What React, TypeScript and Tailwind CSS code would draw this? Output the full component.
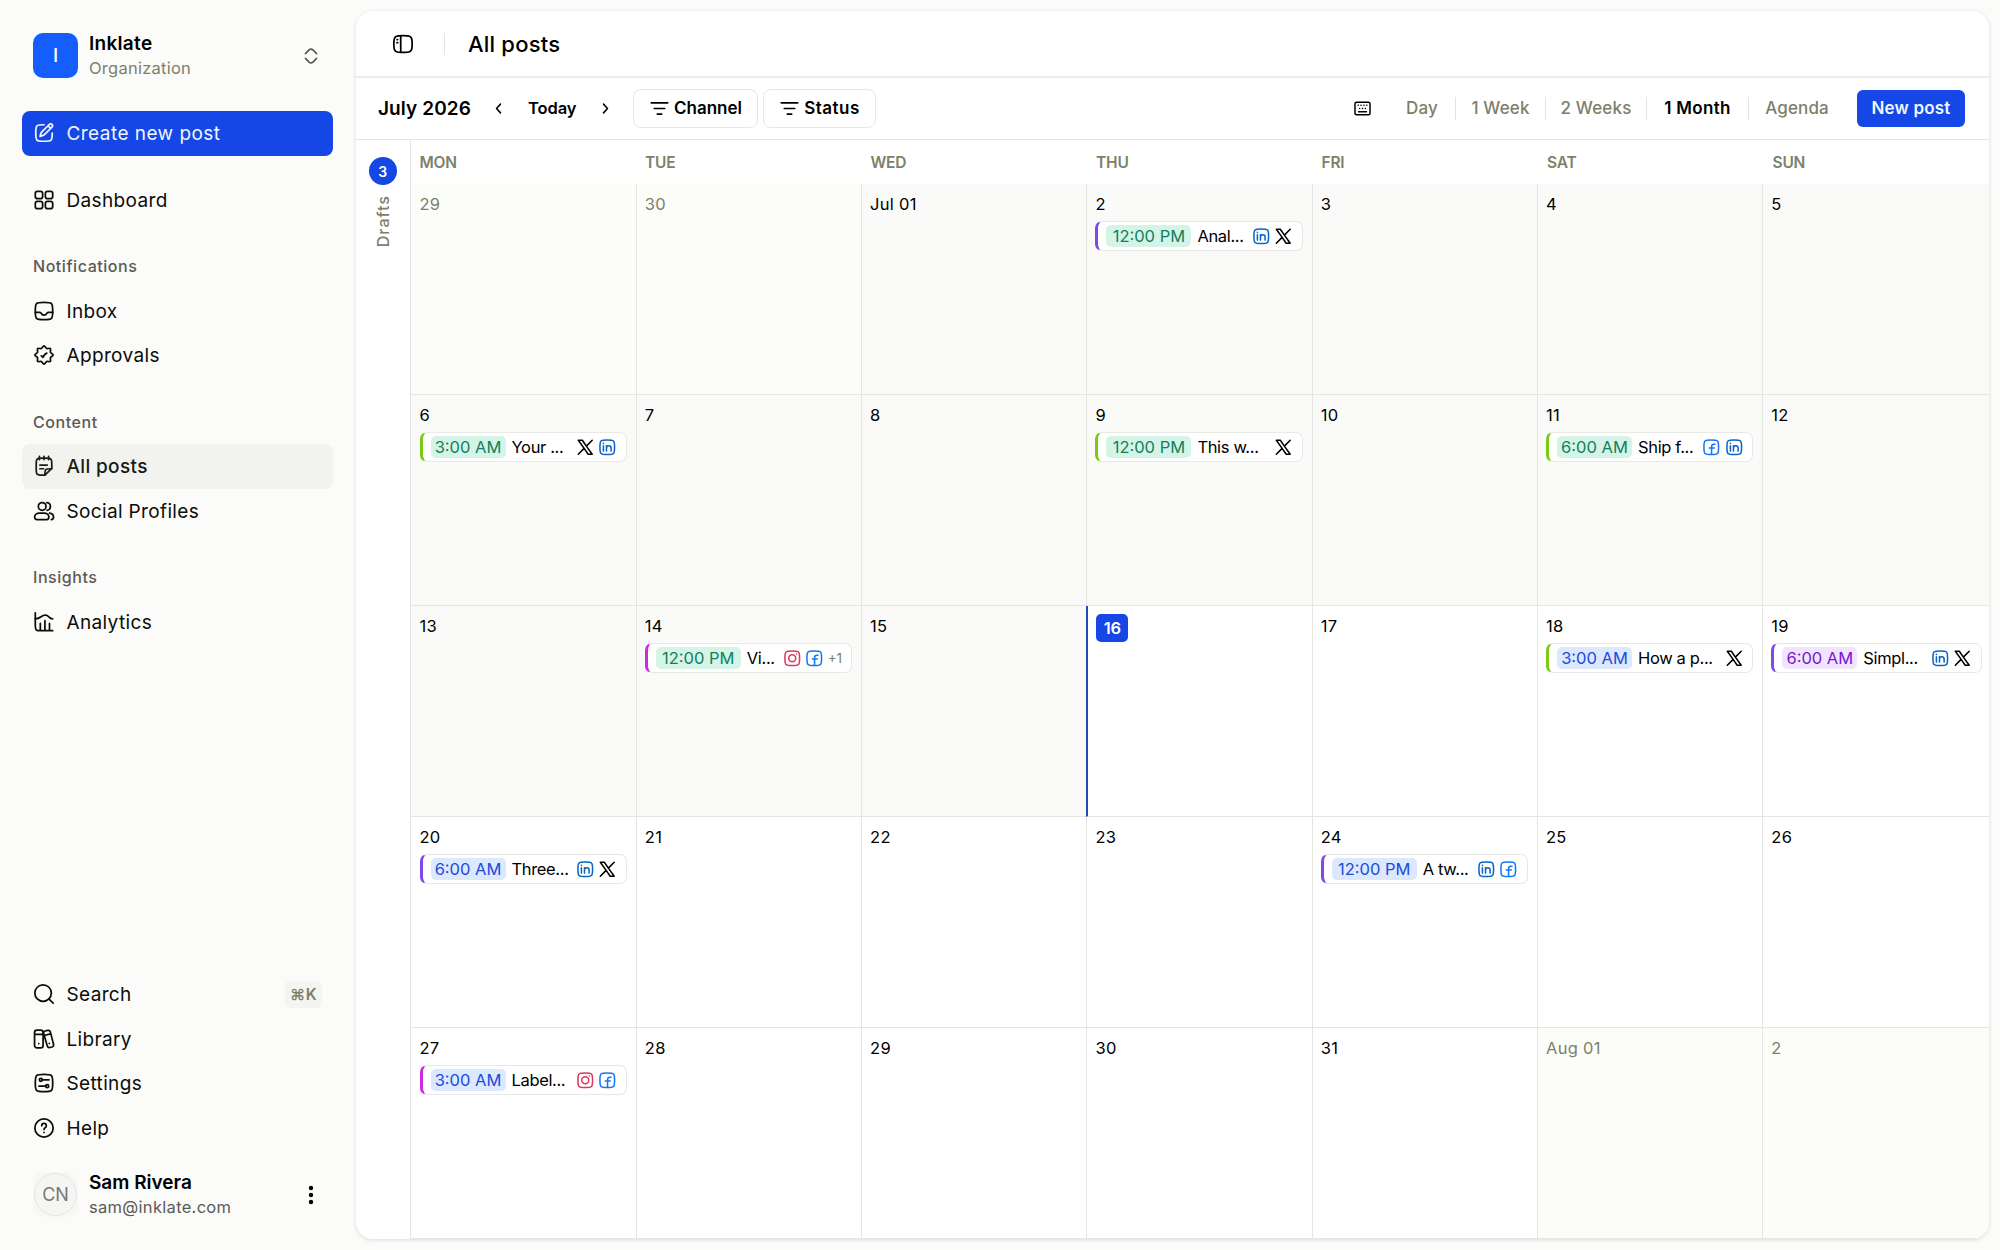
import React from 'react';

type Network = 'x' | 'linkedin' | 'facebook' | 'instagram';

interface Post {
  time: string;
  title: string;
  status: 'published' | 'scheduled' | 'review';
  accent: 'violet' | 'lime' | 'fuchsia';
  networks: Network[];
  extra?: number;
}

interface Day {
  label: string;
  tone?: 'outside' | 'past' | 'today';
  post?: Post;
}

interface IconProps {
  className?: string;
  strokeWidth?: number;
  children?: React.ReactNode;
}

const Icon: React.FC<IconProps> = ({ className = 'size-[22px]', strokeWidth = 1.9, children }) => (
  <svg
    viewBox="0 0 24 24"
    fill="none"
    stroke="currentColor"
    strokeWidth={strokeWidth}
    strokeLinecap="round"
    strokeLinejoin="round"
    className={`shrink-0 ${className}`}
  >
    {children}
  </svg>
);

const SQUARE =
  'M2.5 12C2.5 7.52 2.5 5.28 3.89 3.89C5.28 2.5 7.52 2.5 12 2.5C16.48 2.5 18.72 2.5 20.11 3.89C21.5 5.28 21.5 7.52 21.5 12C21.5 16.48 21.5 18.72 20.11 20.11C18.72 21.5 16.48 21.5 12 21.5C7.52 21.5 5.28 21.5 3.89 20.11C2.5 18.72 2.5 16.48 2.5 12Z';

const icons = {
  edit: (
    <>
      <path d="M16.43 4.1 17.85 2.69C18.63 1.9 19.9 1.9 20.69 2.69 21.47 3.47 21.47 4.75 20.69 5.53L19.27 6.95M16.43 4.1 10.76 9.78C9.7 10.84 9.17 11.37 8.81 12.01 8.45 12.66 8.08 14.19 7.73 15.65 9.18 15.3 10.72 14.93 11.36 14.57 12.01 14.21 12.54 13.67 13.6 12.62L19.27 6.95M16.43 4.1 19.27 6.95" />
      <path d="M21 12C21 16.24 21 18.36 19.68 19.68C18.36 21 16.24 21 12 21C7.76 21 5.64 21 4.32 19.68C3 18.36 3 16.24 3 12C3 7.76 3 5.64 4.32 4.32C5.64 3 7.76 3 12 3" />
    </>
  ),
  dashboard: (
    <>
      <rect x="2.5" y="2.5" width="8" height="8" rx="2.4" />
      <rect x="13.5" y="2.5" width="8" height="8" rx="2.4" />
      <rect x="2.5" y="13.5" width="8" height="8" rx="2.4" />
      <rect x="13.5" y="13.5" width="8" height="8" rx="2.4" />
    </>
  ),
  inbox: (
    <>
      <path d={SQUARE} />
      <path d="M21.5 13.5H16.57C15.87 13.5 15.31 14.04 15.01 14.68 14.54 15.7 13.62 16.5 12 16.5 10.38 16.5 9.46 15.7 8.99 14.68 8.69 14.04 8.13 13.5 7.43 13.5H2.5" />
    </>
  ),
  approvals: (
    <>
      <path d="M18.99 5.01C19.78 5.8 18.6 8.03 19.02 9.02 19.45 10.06 22 10.85 22 12 22 13.15 19.45 13.94 19.02 14.98 18.6 15.97 19.78 18.2 18.99 18.99 18.2 19.78 15.97 18.6 14.98 19.02 13.94 19.45 13.15 22 12 22 10.85 22 10.06 19.45 9.02 19.02 8.03 18.6 5.8 19.78 5.01 18.99 4.22 18.2 5.4 15.97 4.98 14.98 4.55 13.94 2 13.15 2 12 2 10.85 4.55 10.06 4.98 9.02 5.4 8.03 4.22 5.8 5.01 5.01 5.8 4.22 8.03 5.4 9.02 4.98 10.06 4.55 10.85 2 12 2 13.15 2 13.94 4.55 14.98 4.98 15.97 5.4 18.2 4.22 18.99 5.01Z" />
      <path d="M9 12.9C9 12.9 10.2 13.2 10.8 14.5C10.8 14.5 12.8 10.9 15 10" />
    </>
  ),
  notes: (
    <>
      <path d="M17 1.5V5M12 1.5V5M7 1.5V5M7.5 15H11.5M7.5 11H15.5" />
      <path d="M13 22H10.5C7.2 22 5.55 22 4.53 20.97C3.5 19.95 3.5 18.3 3.5 15V10.5C3.5 7.2 3.5 5.55 4.53 4.53C5.55 3.5 7.2 3.5 10.5 3.5H13.5C16.8 3.5 18.45 3.5 19.47 4.53C20.5 5.55 20.5 7.2 20.5 10.5V14.5L13 22Z" />
      <path d="M13 22V21C13 18.17 13 16.76 13.88 15.88C14.76 15 16.17 15 19 15H20.5" />
    </>
  ),
  users: (
    <>
      <circle cx="10" cy="7" r="4.2" />
      <path d="M15 2.8C17.3 2.8 19 4.7 19 7C19 9.2 17.5 10.9 15.4 11.2" />
      <path d="M1.8 18.6C1.8 16 4.3 14.3 7 14.3H12.2C14.9 14.3 17.3 16 17.3 18.6C17.3 20.2 16.2 21.4 15 21.4H4.2C2.9 21.4 1.8 20.2 1.8 18.6Z" />
      <path d="M18 14.4C20.3 14.7 22.4 16.3 22.4 18.6C22.4 20.2 21.5 21.4 20 21.4" />
    </>
  ),
  analytics: (
    <>
      <path d="M21.5 21.5H9.5C6.2 21.5 4.55 21.5 3.53 20.47C2.5 19.45 2.5 17.8 2.5 14.5V2" />
      <path d="M8 13.5V21M13 10.5V21M18 13.5V21" />
      <path d="M2.5 8.5C9 8.5 8.5 4.5 13.5 4.5C17.5 4.5 17 8.5 21.5 8.5" />
    </>
  ),
  search: (
    <>
      <path d="M17.5 17.5 22 22" />
      <circle cx="11" cy="11" r="9" />
    </>
  ),
  library: (
    <>
      <rect x="1.7" y="2.3" width="9.3" height="19.4" rx="2.6" />
      <path d="M1.9 7H10.8M12.2 8.2 19 6.4M6.3 17H6.32M17.8 16.8H17.82" />
      <path d="M13.2 3.3 16 2.6C17.5 2.3 18.5 2.9 18.9 4.2L22.4 17.7C22.7 19 22 20.3 20.7 20.7L18.4 21.3C17.1 21.6 16 21 15.6 19.7L11.6 6.1C11.3 4.7 11.9 3.7 13.2 3.3Z" />
    </>
  ),
  settings: (
    <>
      <path d={SQUARE} />
      <circle cx="8.5" cy="8.5" r="1.6" />
      <circle cx="15.5" cy="15.5" r="1.6" />
      <path d="M10.1 8.5H17.5M13.9 15.5H6.5" />
    </>
  ),
  help: (
    <>
      <circle cx="12" cy="12" r="10" />
      <path d="M9.5 9.5C9.5 8.12 10.62 7 12 7C13.38 7 14.5 8.12 14.5 9.5C14.5 10 14.35 10.46 14.1 10.85C13.35 12 12 12.4 12 13.6M12 16.9H12.01" />
    </>
  ),
  panel: (
    <>
      <path d="M2 12C2 8.3 2 6.45 3.17 5.03C3.67 4.53 4.23 3.9 4.91 3.57C6.27 2.8 8.2 2.8 12 2.8C15.8 2.8 17.73 2.8 19.09 3.57C19.77 3.9 20.33 4.53 20.83 5.03C22 6.45 22 8.3 22 12C22 15.7 22 17.55 20.83 18.97C20.33 19.47 19.77 20.1 19.09 20.43C17.73 21.2 15.8 21.2 12 21.2C8.2 21.2 6.27 21.2 4.91 20.43C4.23 20.1 3.67 19.47 3.17 18.97C2 17.55 2 15.7 2 12Z" />
      <path d="M9.5 3V21M5.5 7.2H6.2M5.5 10.6H6.2" />
    </>
  ),
  filter: <path d="M2.5 5.5H21.5M6 12H18M9.5 18.5H14.5" />,
};

const BRAND_ICONS: Record<Network, React.ReactNode> = {
  x: (
    <Icon className="size-[18.5px] text-black" strokeWidth={2}>
      <path d="M3 21 10.55 13.45M10.55 13.45 3 3H8.2L13.45 10.55M10.55 13.45 15.8 21H21L13.45 10.55M13.45 10.55 21 3" />
    </Icon>
  ),
  linkedin: (
    <Icon className="size-[18.5px] text-[#0a66c2]" strokeWidth={2}>
      <path d={SQUARE} />
      <path d="M7 10V17M11 13V17M11 13C11 11.34 12.34 10 14 10C15.66 10 17 11.34 17 13V17M11 13V10M7 7V6.8" />
    </Icon>
  ),
  facebook: (
    <Icon className="size-[18.5px] text-[#1877f2]" strokeWidth={2}>
      <path d={SQUARE} />
      <path d="M16.9 8H15.5C13.6 8 12.4 9.1 12.4 11V21M9.5 13H16" />
    </Icon>
  ),
  instagram: (
    <Icon className="size-[18.5px] text-[#dc3a5e]" strokeWidth={2}>
      <path d={SQUARE} />
      <circle cx="12" cy="12" r="4.5" />
      <path d="M17.5 6.5H17.49" />
    </Icon>
  ),
};

const STATUS_CLASSES = {
  published: 'bg-[#d5f4e8] text-[#11805a]',
  scheduled: 'bg-[#dbe8fe] text-[#1d4bd8]',
  review: 'bg-[#f0e4fe] text-[#7a14d0]',
};

const ACCENT_CLASSES = {
  violet: 'border-l-[#8048e8]',
  lime: 'border-l-[#79cb14]',
  fuchsia: 'border-l-[#cc2be0]',
};

const TONE_CLASSES = {
  outside: 'bg-[#fcfdf9] text-[#7d8069]',
  past: 'bg-[#fafaf9] text-black',
  today: 'bg-white text-black',
};

const WEEKDAYS = ['MON', 'TUE', 'WED', 'THU', 'FRI', 'SAT', 'SUN'];

const days: Day[] = [
  { label: '29', tone: 'outside' },
  { label: '30', tone: 'outside' },
  { label: 'Jul 01', tone: 'past' },
  {
    label: '2',
    tone: 'past',
    post: { time: '12:00 PM', title: 'Anal...', status: 'published', accent: 'violet', networks: ['linkedin', 'x'] },
  },
  { label: '3', tone: 'past' },
  { label: '4', tone: 'past' },
  { label: '5', tone: 'past' },
  {
    label: '6',
    tone: 'past',
    post: { time: '3:00 AM', title: 'Your ...', status: 'published', accent: 'lime', networks: ['x', 'linkedin'] },
  },
  { label: '7', tone: 'past' },
  { label: '8', tone: 'past' },
  {
    label: '9',
    tone: 'past',
    post: { time: '12:00 PM', title: 'This w...', status: 'published', accent: 'lime', networks: ['x'] },
  },
  { label: '10', tone: 'past' },
  {
    label: '11',
    tone: 'past',
    post: { time: '6:00 AM', title: 'Ship f...', status: 'published', accent: 'lime', networks: ['facebook', 'linkedin'] },
  },
  { label: '12', tone: 'past' },
  { label: '13', tone: 'past' },
  {
    label: '14',
    tone: 'past',
    post: {
      time: '12:00 PM',
      title: 'Vi...',
      status: 'published',
      accent: 'fuchsia',
      networks: ['instagram', 'facebook'],
      extra: 1,
    },
  },
  { label: '15', tone: 'past' },
  { label: '16', tone: 'today' },
  { label: '17' },
  {
    label: '18',
    post: { time: '3:00 AM', title: 'How a p...', status: 'scheduled', accent: 'lime', networks: ['x'] },
  },
  {
    label: '19',
    post: { time: '6:00 AM', title: 'Simpl...', status: 'review', accent: 'violet', networks: ['linkedin', 'x'] },
  },
  {
    label: '20',
    post: { time: '6:00 AM', title: 'Three...', status: 'scheduled', accent: 'violet', networks: ['linkedin', 'x'] },
  },
  { label: '21' },
  { label: '22' },
  { label: '23' },
  {
    label: '24',
    post: { time: '12:00 PM', title: 'A tw...', status: 'scheduled', accent: 'violet', networks: ['linkedin', 'facebook'] },
  },
  { label: '25' },
  { label: '26' },
  {
    label: '27',
    post: { time: '3:00 AM', title: 'Label...', status: 'scheduled', accent: 'fuchsia', networks: ['instagram', 'facebook'] },
  },
  { label: '28' },
  { label: '29' },
  { label: '30' },
  { label: '31' },
  { label: 'Aug 01', tone: 'outside' },
  { label: '2', tone: 'outside' },
];

const NavItem: React.FC<{ icon: React.ReactNode; label: string; isActive?: boolean; shortcut?: string }> = ({
  icon,
  label,
  isActive,
  shortcut,
}) => (
  <a
    className={`flex h-[44.5px] items-center rounded-lg px-[11px] text-[19px] tracking-[0.35px] ${
      isActive ? 'bg-[#f2f3ee] font-medium text-[#1a1b16]' : 'text-[#0c0c0a]'
    }`}
  >
    <Icon>{icon}</Icon>
    <span className="ml-[11.5px] pt-[2px]">{label}</span>
    {shortcut && (
      <kbd className="ml-auto flex h-[27px] w-[37px] items-center justify-center rounded-[5px] bg-[#f4f5f0] font-[Inter,sans-serif] text-[15.5px] font-semibold text-[#7d8069]">
        {shortcut}
      </kbd>
    )}
  </a>
);

const NavLabel: React.FC<{ children: string }> = ({ children }) => (
  <div className="mt-[22px] flex h-[44.5px] items-center px-[11px] text-[16px] font-medium tracking-[0.55px] text-[#5a5a56]">
    {children}
  </div>
);

const Sidebar = () => (
  <aside className="flex h-full w-[355px] shrink-0 flex-col pr-[22px] pl-[22px]">
    {/* Organization switcher */}
    <div className="mt-[22px] flex h-[67px] items-center px-[11px]">
      <div className="flex size-[45px] items-center justify-center rounded-[10px] bg-[#155dfc] pt-px text-[19px] font-medium text-white">
        I
      </div>
      <div className="ml-[11px] flex-1">
        <div className="text-[19px] leading-[24px] font-semibold tracking-[0.3px] text-black">Inklate</div>
        <div className="text-[16.5px] leading-[24px] tracking-[0.25px] text-[#7d8069]">Organization</div>
      </div>
      <Icon className="size-[22px] text-[#5a5a56]">
        <path d="M6 9.3 9.6 5.7C11.3 4 12.7 4 14.4 5.7L18 9.3M18 14.7 14.4 18.3C12.7 20 11.3 20 9.6 18.3L6 14.7" />
      </Icon>
    </div>

    <button className="mt-[22px] flex h-[44.5px] items-center rounded-lg bg-[#1447e6] px-[11px] text-[19px] text-[#eff6ff]">
      <Icon>{icons.edit}</Icon>
      <span className="ml-[11.5px] pt-[2px] tracking-[0.45px]">Create new post</span>
    </button>

    <nav className="mt-[22px]">
      <NavItem icon={icons.dashboard} label="Dashboard" />
      <NavLabel>Notifications</NavLabel>
      <NavItem icon={icons.inbox} label="Inbox" />
      <NavItem icon={icons.approvals} label="Approvals" />
      <NavLabel>Content</NavLabel>
      <NavItem icon={icons.notes} label="All posts" isActive />
      <NavItem icon={icons.users} label="Social Profiles" />
      <NavLabel>Insights</NavLabel>
      <NavItem icon={icons.analytics} label="Analytics" />
    </nav>

    <nav className="mt-auto">
      <NavItem icon={icons.search} label="Search" shortcut="⌘K" />
      <NavItem icon={icons.library} label="Library" />
      <NavItem icon={icons.settings} label="Settings" />
      <NavItem icon={icons.help} label="Help" />
    </nav>

    {/* User menu */}
    <div className="mt-[11px] mb-[22px] flex h-[67px] items-center px-[11px]">
      <div className="flex size-[45px] items-center justify-center rounded-[11px] bg-[#f7f7f6]">
        <div className="flex size-[43px] items-center justify-center rounded-full border border-[#e6e6e4] bg-[#f5f5f4] text-[18px] text-[#79796f]">
          CN
        </div>
      </div>
      <div className="ml-[11px] flex-1">
        <div className="text-[19px] leading-[24px] font-semibold text-black">Sam Rivera</div>
        <div className="text-[16.5px] leading-[24px] tracking-[0.3px] text-[#5a5a56]">sam@inklate.com</div>
      </div>
      <Icon className="size-[22px] text-black" strokeWidth={2.6}>
        <circle cx="12" cy="4.3" r="1.1" />
        <circle cx="12" cy="12" r="1.1" />
        <circle cx="12" cy="19.7" r="1.1" />
      </Icon>
    </div>
  </aside>
);

const ViewTab: React.FC<{ label: string; className: string; isActive?: boolean; isFirst?: boolean }> = ({
  label,
  className,
  isActive,
  isFirst,
}) => (
  <div
    className={`flex h-[23px] items-center justify-center text-[17px] whitespace-nowrap ${className} ${
      isFirst ? '' : 'border-l border-[#e3e4de]'
    } ${isActive ? 'font-semibold tracking-[0.3px] text-black' : 'font-medium tracking-[0.15px] text-[#7d8069]'}`}
  >
    {label}
  </div>
);

const Toolbar = () => (
  <div className="flex h-[62px] shrink-0 items-center border-b border-[#e5e5e1] pr-[24px] pl-[22px] font-medium text-black">
    <div className="w-[94px] pt-px text-[19px] font-semibold tracking-[0.1px] whitespace-nowrap">July 2026</div>
    <Icon className="ml-[17px] size-[19px]" strokeWidth={2}>
      <path d="M14.5 6.5 9.5 12 14.5 17.5" />
    </Icon>
    <div className="ml-[20px] w-[50px] text-[16.5px] font-semibold tracking-[-0.1px]">Today</div>
    <Icon className="ml-[18px] size-[19px]" strokeWidth={2}>
      <path d="M9.5 6.5 14.5 12 9.5 17.5" />
    </Icon>
    <button className="ml-[18px] flex h-[39px] w-[125px] items-center justify-center gap-[4px] rounded-lg border border-[#e8e8e3] text-[17px] font-semibold">
      <Icon className="size-[21px]">{icons.filter}</Icon>
      Channel
    </button>
    <button className="ml-[5px] flex h-[39px] w-[113px] items-center justify-center gap-[4px] rounded-lg border border-[#e8e8e3] text-[17px] font-semibold tracking-[0.5px]">
      <Icon className="size-[21px]">{icons.filter}</Icon>
      Status
    </button>

    <Icon className="ml-auto size-[19px]">
      <rect x="2.5" y="4" width="19" height="16" rx="2" />
      <path d="M7 16H17M6.5 8H6.6M10.1 8H10.2M13.8 8H13.9M17.4 8H17.5M8.3 12H8.4M12 12H12.1M15.6 12H15.7" />
    </Icon>
    <div className="ml-[17px] flex items-center">
      <ViewTab label="Day" className="w-[66px]" isFirst />
      <ViewTab label="1 Week" className="w-[90px]" />
      <ViewTab label="2 Weeks" className="w-[101px]" />
      <ViewTab label="1 Month" className="w-[102px]" isActive />
      <ViewTab label="Agenda" className="w-[97px]" />
    </div>
    <button className="ml-[12px] h-[37px] w-[108px] rounded-[6px] bg-[#1447e6] text-[17px] font-semibold tracking-[0.2px] text-[#eff6ff]">
      New post
    </button>
  </div>
);

const PostCard: React.FC<{ post: Post }> = ({ post }) => (
  <div
    className={`flex h-[30px] items-center rounded-[7px] border border-l-[3px] border-[#e8e8e4] bg-white pr-[9px] pl-[8px] text-[16.5px] text-black ${ACCENT_CLASSES[post.accent]}`}
  >
    <span
      className={`flex h-[22px] shrink-0 items-center justify-center rounded-[5px] whitespace-nowrap ${
        post.time.length > 7 ? 'w-[85px]' : 'w-[75px]'
      } ${STATUS_CLASSES[post.status]}`}
    >
      {post.time}
    </span>
    <span className="ml-[6px] tracking-[-0.35px] whitespace-nowrap">{post.title}</span>
    <span className="ml-auto flex items-center gap-[4px]">
      {post.networks.map((network) => (
        <React.Fragment key={network}>{BRAND_ICONS[network]}</React.Fragment>
      ))}
      {post.extra && <span className="text-[13.5px] text-[#7d8069]">+{post.extra}</span>}
    </span>
  </div>
);

const DayCell: React.FC<{ day: Day; isFirstColumn: boolean }> = ({ day, isFirstColumn }) => (
  <div
    className={`min-w-0 border-b border-b-[#e5e5e1] pt-[8px] pr-[9px] ${
      isFirstColumn ? 'pl-[9px]' : day.tone === 'today' ? 'border-l-2 border-l-[#1d4fae] pl-[8px]' : 'border-l border-l-[#e5e5e1] pl-[8px]'
    } ${day.tone ? TONE_CLASSES[day.tone] : 'bg-white text-black'}`}
  >
    {day.tone === 'today' ? (
      <div className="flex h-[28px] w-[32px] items-center justify-center rounded-[5px] bg-[#1447e6] text-[16.5px] font-semibold text-white">
        {day.label}
      </div>
    ) : (
      <div className="mb-[5px] h-[24px] text-[16.5px] leading-[24px] tracking-[0.3px]">{day.label}</div>
    )}
    {day.post && <PostCard post={day.post} />}
  </div>
);

const App = () => (
  <div className="flex h-[1250px] w-[2000px] overflow-hidden bg-[#fbfbf9] font-[Inter,'Noto_Sans',sans-serif]">
    <Sidebar />

    <main className="mt-[11px] mr-[11px] mb-[11px] ml-px flex min-w-0 flex-1 flex-col overflow-hidden rounded-[17px] bg-white shadow-[0_1px_4px_rgba(0,0,0,0.13)]">
      <header className="flex h-[67px] shrink-0 items-center border-b-2 border-[#ecece9] pl-[36px]">
        <Icon className="size-[22px] text-black">{icons.panel}</Icon>
        <div className="ml-[30px] h-[22px] w-px bg-[#e3e4de]" />
        <h1 className="ml-[23px] pt-px text-[22px] font-medium tracking-[0.2px] text-black">All posts</h1>
      </header>

      <Toolbar />

      <div className="flex min-h-0 flex-1">
        {/* Drafts rail */}
        <div className="flex w-[54.5px] shrink-0 flex-col items-center border-r border-[#e5e5e1] pt-[17px]">
          <div className="flex size-[28px] items-center justify-center rounded-full bg-[#1447e6] text-[14px] font-semibold text-white">
            3
          </div>
          <div className="mt-[10px] rotate-180 text-[16px] font-medium tracking-[1px] text-[#7d8069] [writing-mode:vertical-rl]">
            Drafts
          </div>
        </div>

        {/* Month grid */}
        <div className="flex min-w-0 flex-1 flex-col">
          <div className="grid h-[44px] shrink-0 grid-cols-7 pt-px">
            {WEEKDAYS.map((weekday) => (
              <div
                key={weekday}
                className="flex items-center pl-[9px] text-[15.5px] font-semibold tracking-[-0.2px] text-[#7d8069]"
              >
                {weekday}
              </div>
            ))}
          </div>
          <div className="mr-[-1.5px] grid flex-1 grid-cols-[repeat(6,225.3px)_1fr] grid-rows-5">
            {days.map((day, index) => (
              <DayCell key={index} day={day} isFirstColumn={index % 7 === 0} />
            ))}
          </div>
        </div>
      </div>
    </main>
  </div>
);

export default App;
